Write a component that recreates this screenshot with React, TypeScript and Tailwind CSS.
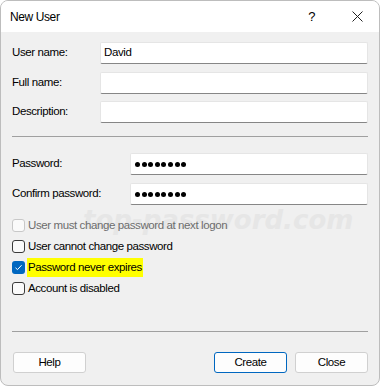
import { ReactNode } from "react";

function TextBox({ children }: { children?: ReactNode }) {
  return (
    <div className="h-[22px] flex-1 bg-white border border-[#e5e5e5] border-b-[#868686] rounded-[2px] flex items-center px-[3px] text-black">
      {children}
    </div>
  );
}

function Dots() {
  return (
    <div className="flex gap-[1.6px] pl-[1px]">
      {Array.from({ length: 8 }).map((_, i) => (
        <span key={i} className="w-[5px] h-[5px] rounded-full bg-black" />
      ))}
    </div>
  );
}

function Check({
  label,
  checked = false,
  disabled = false,
  highlight = false,
}: {
  label: string;
  checked?: boolean;
  disabled?: boolean;
  highlight?: boolean;
}) {
  return (
    <div className="h-[21px] flex items-center">
      {checked ? (
        <span className="w-[13px] h-[13px] rounded-[3px] bg-[#0067c0] flex items-center justify-center">
          <svg width="9" height="9" viewBox="0 0 9 9">
            <path d="M1.5 4.8 L3.5 6.6 L7.6 2.2" fill="none" stroke="white" strokeWidth="1" />
          </svg>
        </span>
      ) : (
        <span
          className={`w-[13px] h-[13px] rounded-[3px] border bg-[#fafafa] ${
            disabled ? "border-[#c8c8c8]" : "border-[#3a3a3a]"
          }`}
        />
      )}
      <span
        className={`ml-[2px] px-[1px] leading-[19px] ${highlight ? "bg-[#ffff00]" : ""} ${
          disabled ? "text-[#6d6d6d]" : "text-black"
        }`}
      >
        {label}
      </span>
    </div>
  );
}

function Btn({ children, primary = false }: { children: ReactNode; primary?: boolean }) {
  return (
    <div
      className={`w-[73px] h-[21px] rounded-[3px] flex items-center justify-center bg-[#fdfdfd] border ${
        primary ? "border-[#0067c0]" : "border-[#d0d0d0]"
      }`}
    >
      {children}
    </div>
  );
}

export default function App() {
  return (
    <div className="w-[380px] h-[386px] bg-white">
      <div
        className="relative w-[380px] h-[386px] rounded-[8px] border border-[#bdbdbd] overflow-hidden bg-[#f0f0f0] text-[11.5px] tracking-[-0.4px] text-black flex flex-col"
        style={{ fontFamily: '"Liberation Sans", Arial, sans-serif' }}
      >
        {/* watermark, behind the controls */}
        <div
          className="absolute left-[82px] top-[200px] whitespace-nowrap text-[26px] tracking-normal italic font-bold text-[#e6e6e6] pointer-events-none"
          style={{ fontFamily: '"DejaVu Sans", sans-serif' }}
        >
          top-password.com
        </div>

        {/* title bar */}
        <div className="relative h-[31px] bg-white flex items-center pl-[9px] shrink-0">
          <span className="text-[12px]">New User</span>
          <span className="ml-auto mr-[37px] text-[13px]">?</span>
          <svg className="mr-[16px]" width="11" height="11" viewBox="0 0 11 11">
            <path d="M0.5 0.5 L10.5 10.5 M10.5 0.5 L0.5 10.5" stroke="#222" strokeWidth="1" />
          </svg>
        </div>

        <div className="relative flex flex-col px-[11px]">
          <div className="mt-[10px] flex items-center">
            <span className="w-[88px]">User name:</span>
            <TextBox>David</TextBox>
          </div>
          <div className="mt-[8px] flex items-center">
            <span className="w-[88px]">Full name:</span>
            <TextBox />
          </div>
          <div className="mt-[7px] flex items-center">
            <span className="w-[88px]">Description:</span>
            <TextBox />
          </div>

          <div className="mt-[13px] h-px bg-[#a0a0a0]" />

          <div className="mt-[16px] flex items-center">
            <span className="w-[118px]">Password:</span>
            <TextBox>
              <Dots />
            </TextBox>
          </div>
          <div className="mt-[8px] flex items-center">
            <span className="w-[118px]">Confirm password:</span>
            <TextBox>
              <Dots />
            </TextBox>
          </div>

          <div className="mt-[10px] flex flex-col">
            <Check label="User must change password at next logon" disabled />
            <Check label="User cannot change password" />
            <Check label="Password never expires" checked highlight />
            <Check label="Account is disabled" />
          </div>

          <div className="mt-[32px] h-px bg-[#a0a0a0]" />

          <div className="mt-[20px] flex items-center pl-[1px]">
            <Btn>Help</Btn>
            <div className="ml-auto flex gap-[8px]">
              <Btn primary>Create</Btn>
              <Btn>Close</Btn>
            </div>
          </div>
        </div>
      </div>
    </div>
  );
}
